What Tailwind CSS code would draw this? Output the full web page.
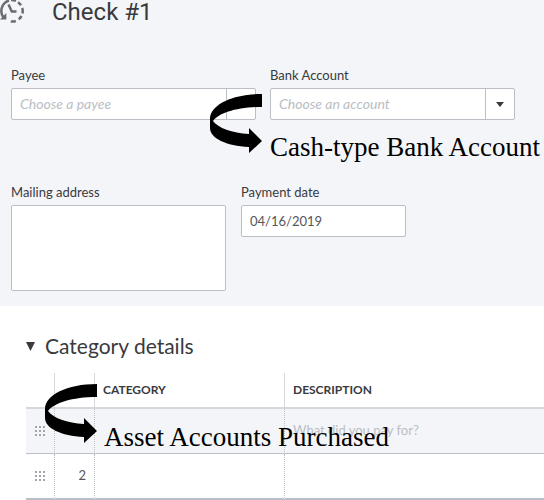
<!DOCTYPE html>
<html lang="en">
<head>
  <meta charset="UTF-8" />
  <meta name="viewport" content="width=device-width, initial-scale=1.0" />
  <title>Check #1</title>
  <script src="https://cdn.jsdelivr.net/npm/@tailwindcss/browser@4"></script>
</head>
<body class="overflow-x-hidden bg-white font-['Lato',sans-serif] text-[#393a3d]">

  <!-- shared shapes -->
  <svg class="hidden">
    <symbol id="arrow" viewBox="0 0 52 59">
      <path d="M52 0C22 0 0 11 0 25v9c0 10 16 18 39 19v6l13-12-13-13v6C22 39 8 34 3 27c6-8 24-14 49-14z" />
    </symbol>
    <symbol id="grip" viewBox="0 0 10 10">
      <path d="M0 0h2v2H0zM4 0h2v2H4zM8 0h2v2H8zM0 4h2v2H0zM4 4h2v2H4zM8 4h2v2H8zM0 8h2v2H0zM4 8h2v2H4zM8 8h2v2H8z" />
    </symbol>
  </svg>

  <header class="flex h-[67px] items-start bg-[#f4f5f8]">
    <svg class="h-6 w-[52px] shrink-0" viewBox="0 0 52 24" fill="none" stroke="#6b6c72" stroke-width="2.5">
      <path d="M3.500 17.500A11 11 0 0 1 9 .5" />
      <path d="M11 0a11 11 0 0 1 5 .8M18 2.200a11 11 0 0 1 3 3M22.200 8a11 11 0 0 1 .3 5.500M21.500 16a11 11 0 0 1-2.800 3.200M15.800 21a11 11 0 0 1-5 .5" />
      <path d="M0 19.500h6.300V13z" fill="#6b6c72" stroke="none" />
      <path d="M8.500 4.500l3.300 7h4.700" />
    </svg>
    <h1 class="font-['Roboto',sans-serif] text-2xl leading-6">Check #1</h1>
  </header>

  <form class="bg-[#f4f5f8] px-[11px] pb-[15px]">
    <div class="flex gap-[14px]">
      <div class="w-[245px] shrink-0">
        <label for="payee" class="block pb-[5px] text-[13px] leading-4">Payee</label>
        <div class="flex h-8 rounded-xs border border-[#babec5] bg-white">
          <input id="payee" type="text" placeholder="Choose a payee" class="min-w-0 flex-1 px-2 text-sm placeholder:text-[#babec5] placeholder:italic" />
          <button type="button" aria-label="Show payees" class="flex w-[29px] items-center justify-center border-l border-[#babec5]">
            <svg class="h-[5px] w-2" viewBox="0 0 8 5" fill="#393a3d"><path d="M0 0h8L4 5z" /></svg>
          </button>
        </div>
      </div>

      <div class="relative w-[245px] shrink-0">
        <label for="account" class="block pb-[5px] text-[13px] leading-4">Bank Account</label>
        <div class="flex h-8 rounded-xs border border-[#babec5] bg-white">
          <input id="account" type="text" placeholder="Choose an account" class="min-w-0 flex-1 px-2 text-sm placeholder:text-[#babec5] placeholder:italic" />
          <button type="button" aria-label="Show accounts" class="flex w-[29px] items-center justify-center border-l border-[#babec5]">
            <svg class="h-[5px] w-2" viewBox="0 0 8 5" fill="#393a3d"><path d="M0 0h8L4 5z" /></svg>
          </button>
        </div>
        <!-- note -->
        <svg class="absolute top-[27px] -left-[60px] h-[59px] w-[52px]"><use href="#arrow" /></svg>
        <p class="absolute top-16 left-0 font-['Liberation_Serif',serif] text-[27px] leading-8 whitespace-nowrap text-black">Cash-type Bank Account</p>
      </div>
    </div>

    <div class="mt-16 flex items-start gap-[15px]">
      <div class="w-[215px] shrink-0">
        <label for="address" class="block pb-[5px] text-[13px] leading-4">Mailing address</label>
        <textarea id="address" class="block h-[86px] w-full resize-none rounded-xs border border-[#babec5] bg-white px-2 py-1 text-[13px]"></textarea>
      </div>
      <div class="w-[165px] shrink-0">
        <label for="date" class="block pb-[5px] text-[13px] leading-4">Payment date</label>
        <input id="date" type="text" value="04/16/2019" class="block h-8 w-full rounded-xs border border-[#babec5] bg-white px-2 text-[13px] text-[#55565a]" />
      </div>
    </div>
  </form>

  <section class="pt-[26px] pl-[26px]">
    <h2>
      <button type="button" class="flex items-center gap-[10px] text-[21px] leading-7">
        <svg class="h-[9px] w-[9px]" viewBox="0 0 9 9" fill="#393a3d"><path d="M0 0h9L4.500 9z" /></svg>
        Category details
      </button>
    </h2>

    <div class="relative mt-[13px]">
      <table class="w-full table-fixed border-separate border-spacing-0 text-left text-[13px]">
        <thead>
          <tr class="h-9 text-xs">
            <th class="w-[29px] border-r border-b-2 border-[#d4d7dc]"></th>
            <th class="w-10 border-r border-b-2 border-[#d4d7dc]"></th>
            <th class="w-[190px] border-r border-b-2 border-[#d4d7dc] pl-2 font-bold">CATEGORY</th>
            <th class="border-b-2 border-[#d4d7dc] pl-2 font-bold">DESCRIPTION</th>
          </tr>
        </thead>
        <tbody>
          <tr class="h-[45px] bg-[#f4f5f8]">
            <td class="border-r border-b border-[#babec5] [border-right-style:dotted] pl-[9px]">
              <svg class="h-[10px] w-[10px]" fill="#a3a5ab"><use href="#grip" /></svg>
            </td>
            <td class="border-r border-b border-[#babec5] [border-right-style:dotted] pr-2 text-right"></td>
            <td class="border-r border-b border-[#babec5] [border-right-style:dotted]"></td>
            <td class="border-b border-[#babec5] pl-2">
              <input type="text" aria-label="Description" placeholder="What did you pay for?" class="w-full placeholder:text-[#babec5]" />
            </td>
          </tr>
          <tr class="h-[46px]">
            <td class="border-r border-b-2 border-[#babec5] [border-right-style:dotted] pl-[9px]">
              <svg class="h-[10px] w-[10px]" fill="#a3a5ab"><use href="#grip" /></svg>
            </td>
            <td class="border-r border-b-2 border-[#babec5] [border-right-style:dotted] pr-2 text-right text-[#55565a]">2</td>
            <td class="border-r border-b-2 border-[#babec5] [border-right-style:dotted]"></td>
            <td class="border-b-2 border-[#babec5]"></td>
          </tr>
        </tbody>
      </table>
      <!-- note -->
      <svg class="absolute top-[11px] left-[19px] h-[59px] w-[52px]"><use href="#arrow" /></svg>
      <p class="absolute top-12 left-[78px] font-['Liberation_Serif',serif] text-[27px] leading-8 whitespace-nowrap text-black">Asset Accounts Purchased</p>
    </div>
  </section>

</body>
</html>
